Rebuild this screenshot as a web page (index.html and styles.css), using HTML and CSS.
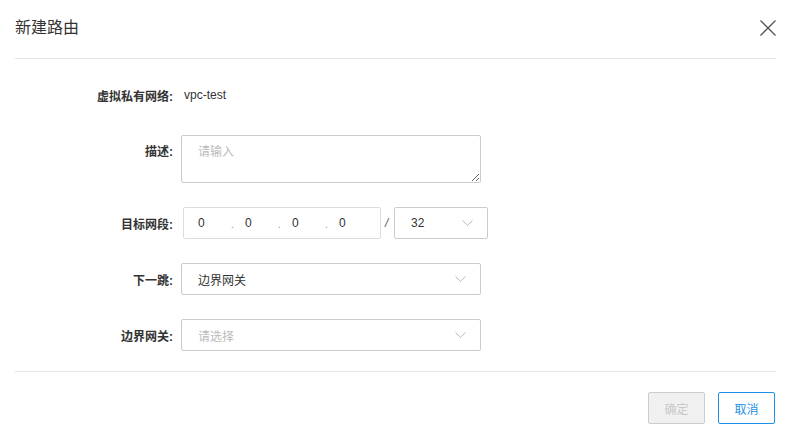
FILE: index.html
```html
<!DOCTYPE html>
<html lang="zh-CN">
<head>
<meta charset="utf-8">
<title>新建路由</title>
<link rel="stylesheet" href="styles.css">
</head>
<body>
<div class="dialog">
  <div class="dialog-header">
    <span class="dialog-title">新建路由</span>
    <span class="close">
      <svg width="16" height="16" viewBox="0 0 16 16"><path d="M0.5 0.5 L15.5 15.5 M15.5 0.5 L0.5 15.5" stroke="#555" stroke-width="1.3" fill="none"/></svg>
    </span>
  </div>
  <div class="dialog-body">
    <div class="form-row">
      <label class="form-label">虚拟私有网络:</label>
      <div class="form-value">vpc-test</div>
    </div>
    <div class="form-row row-top">
      <label class="form-label label-top">描述:</label>
      <textarea class="textarea" placeholder="请输入"></textarea>
    </div>
    <div class="form-row">
      <label class="form-label">目标网段:</label>
      <div class="ip-group">
        <div class="ip-input">
          <span class="seg">0</span><span class="dot">.</span>
          <span class="seg">0</span><span class="dot">.</span>
          <span class="seg">0</span><span class="dot">.</span>
          <span class="seg">0</span>
        </div>
        <span class="slash">/</span>
        <div class="select select-mask">
          <span class="select-text">32</span>
          <svg class="chevron" width="11" height="6" viewBox="0 0 11 6"><path d="M0.5 0.5 L5.5 5.3 L10.5 0.5" stroke="#bbb" stroke-width="1" fill="none"/></svg>
        </div>
      </div>
    </div>
    <div class="form-row">
      <label class="form-label">下一跳:</label>
      <div class="select">
        <span class="select-text">边界网关</span>
        <svg class="chevron" width="11" height="6" viewBox="0 0 11 6"><path d="M0.5 0.5 L5.5 5.3 L10.5 0.5" stroke="#bbb" stroke-width="1" fill="none"/></svg>
      </div>
    </div>
    <div class="form-row">
      <label class="form-label">边界网关:</label>
      <div class="select">
        <span class="select-text placeholder">请选择</span>
        <svg class="chevron" width="11" height="6" viewBox="0 0 11 6"><path d="M0.5 0.5 L5.5 5.3 L10.5 0.5" stroke="#bbb" stroke-width="1" fill="none"/></svg>
      </div>
    </div>
  </div>
  <div class="dialog-footer">
    <button class="btn btn-disabled" disabled>确定</button>
    <button class="btn btn-primary-outline">取消</button>
  </div>
</div>
</body>
</html>
```

FILE: styles.css
```css
* { box-sizing: border-box; }
html, body {
  margin: 0;
  padding: 0;
  background: #fff;
}
body {
  font-family: "Liberation Sans", Arial, "Noto Sans CJK SC", sans-serif;
  font-size: 12px;
  color: #333;
  width: 791px;
  height: 437px;
  overflow: hidden;
}
.dialog {
  padding: 0 15px;
}
.dialog-header {
  height: 59px;
  border-bottom: 1px solid #e5e5e5;
  display: flex;
  align-items: flex-start;
  justify-content: space-between;
}
.dialog-title {
  font-size: 16px;
  line-height: 20px;
  margin-top: 18px;
  color: #333;
}
.close {
  display: block;
  width: 16px;
  height: 16px;
  margin-top: 20px;
  margin-right: 0;
}
.close svg { display: block; }
.dialog-body {
  padding: 20px 0 20px;
  border-bottom: 1px solid #e5e5e5;
}
.form-row {
  display: flex;
  align-items: center;
  min-height: 32px;
  margin-bottom: 24px;
}
.form-row:last-child { margin-bottom: 0; }
.row-top { align-items: flex-start; }
.form-label {
  width: 166px;
  padding-right: 8px;
  text-align: right;
  font-weight: bold;
  color: #333;
  flex: none;
}
.label-top { padding-top: 7px; }
.form-value {
  padding-left: 3px;
  margin-top: -1px;
}
.textarea {
  width: 300px;
  height: 48px;
  border: 1px solid #ccc;
  border-radius: 2px;
  padding: 6px 16px;
  font-family: inherit;
  font-size: 12px;
  color: #333;
  resize: both;
  margin: 0;
  outline: none;
}
.textarea::placeholder { color: #bbb; }
.ip-group {
  display: flex;
  align-items: center;
  margin-left: 2px;
}
.ip-input {
  width: 198px;
  height: 32px;
  border: 1px solid #ddd;
  border-radius: 2px;
  display: flex;
  align-items: center;
  padding-left: 14px;
}
.seg {
  width: 33px;
  display: inline-block;
}
.dot {
  width: 14px;
  display: inline-block;
  color: #999;
  font-size: 10px;
  padding-top: 3px;
}
.slash {
  margin: 0 5px 0 4px;
  font-style: italic;
  color: #555;
  width: 3px;
}
.select {
  width: 300px;
  height: 32px;
  border: 1px solid #ccc;
  border-radius: 2px;
  display: flex;
  align-items: center;
  justify-content: space-between;
  padding: 0 14px 0 16px;
}
.select-mask {
  width: 94px;
  margin-left: 1px;
  border-color: #ccc;
}
.select-text { color: #333; }
.placeholder { color: #bbb; }
.chevron { display: block; }
.dialog-footer {
  display: flex;
  justify-content: flex-end;
  gap: 13px;
  padding-top: 20px;
  padding-right: 1px;
}
.btn {
  width: 57px;
  height: 32px;
  border-radius: 2px;
  font-family: inherit;
  font-size: 12px;
  padding: 0;
  background: #fff;
  cursor: pointer;
}
.btn-disabled {
  background: #f0f0f0;
  border: 1px solid #ccc;
  color: #c8c8c8;
}
.btn-primary-outline {
  border: 1px solid #1e90e6;
  color: #1e90e6;
}
```
